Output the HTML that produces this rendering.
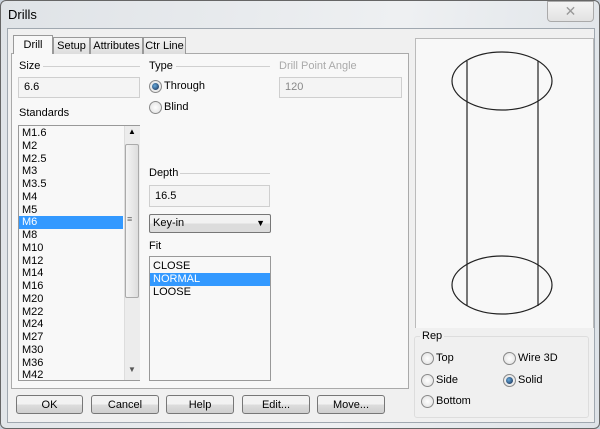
<!DOCTYPE html>
<html><head><style>
body{margin:0;width:600px;height:429px;background:#c9d2dc;font-family:"Liberation Sans",sans-serif;font-size:11px;color:#000;position:relative;overflow:hidden}
.a{position:absolute}
.frame{left:0;top:0;width:598px;height:427px;border:1px solid #666;border-radius:6px;background:linear-gradient(100deg,#dfe3e7,#eef0f2 60%,#dde2e7)}
.client{left:7px;top:28px;width:586px;height:393px;background:#f0f0f0;border:1px solid #a0a8b0}
.inp{background:#f4f4f4;border:1px solid #cfcfcf;padding-left:5px;box-sizing:border-box}
.lbl{font-size:11px}
.line{height:1px;background:#d0d0d0}
.radio{width:11px;height:11px;border-radius:50%;border:1px solid #8a8a8a;background:radial-gradient(circle,#fff,#ddd)}
.radio.on::after{content:"";position:absolute;left:2px;top:2px;width:7px;height:7px;border-radius:50%;background:radial-gradient(circle at 40% 40%,#6ad,#124)}
.btn{height:19px;border:1px solid #777;border-radius:3px;background:linear-gradient(#f2f2f2 50%,#ddd 50%,#cfcfcf);text-align:center;line-height:19px;box-sizing:border-box}
.tab{top:37px;height:17px;border:1px solid #999;border-bottom:none;background:linear-gradient(#f4f4f4,#ddd);text-align:center;line-height:16px;box-sizing:border-box}
.list div{height:12.75px;line-height:12.75px;padding-left:3px}
.sel{background:#3399ff;color:#fff}
</style></head><body>
<div class="a frame"></div>
<div class="a" style="left:8px;top:7px;font-size:13px">Drills</div>
<div class="a" style="left:547px;top:1px;width:45px;height:19px;border:1px solid #aaa;border-radius:0 0 4px 4px;background:linear-gradient(#f4f4f4,#e2e2e2);text-align:center;color:#999;font-size:14px;line-height:18px">✕</div>
<div class="a client"></div>
<div class="a" style="left:11px;top:53px;width:396px;height:334px;border:1px solid #aaa;background:#f8f8f8"></div>
<div class="a tab" style="left:13px;top:35px;width:40px;height:19px;background:#f8f8f8;line-height:18px">Drill</div>
<div class="a tab" style="left:53px;width:37px">Setup</div>
<div class="a tab" style="left:90px;width:53px">Attributes</div>
<div class="a tab" style="left:143px;width:43px">Ctr Line</div>

<div class="a lbl" style="left:19px;top:60px">Size</div><div class="a line" style="left:43px;top:66px;width:97px"></div>
<div class="a inp" style="left:18px;top:77px;width:122px;height:21px;line-height:19px">6.6</div>
<div class="a lbl" style="left:149px;top:60px">Type</div><div class="a line" style="left:176px;top:66px;width:94px"></div>
<div class="a radio on" style="left:149px;top:80px"></div><div class="a" style="left:164px;top:80px">Through</div>
<div class="a radio" style="left:149px;top:101px"></div><div class="a" style="left:164px;top:101px">Blind</div>
<div class="a lbl" style="left:279px;top:60px;color:#aaa">Drill Point Angle</div>
<div class="a inp" style="left:279px;top:77px;width:123px;height:21px;line-height:19px;color:#888">120</div>
<div class="a lbl" style="left:19px;top:107px">Standards</div>
<div class="a" style="left:18px;top:125px;width:122px;height:256px;border:1px solid #999;background:#f8f8f8;box-sizing:border-box"></div>
<div class="a list" style="left:19px;top:127px;width:104px">
<div>M1.6</div><div>M2</div><div>M2.5</div><div>M3</div><div>M3.5</div><div>M4</div><div>M5</div><div class="sel">M6</div><div>M8</div><div>M10</div><div>M12</div><div>M14</div><div>M16</div><div>M20</div><div>M22</div><div>M24</div><div>M27</div><div>M30</div><div>M36</div><div>M42</div></div>
<div class="a" style="left:124px;top:126px;width:15px;height:254px;background:#ececec;border-left:1px solid #ddd"></div>
<div class="a" style="left:128px;top:127px;font-size:8px">▲</div>
<div class="a" style="left:128px;top:365px;font-size:8px;color:#555">▼</div>
<div class="a" style="left:125px;top:144px;width:12px;height:152px;border:1px solid #aaa;border-radius:2px;background:linear-gradient(90deg,#f4f4f4,#ddd)"></div>
<div class="a" style="left:127px;top:214px;font-size:9px;color:#666">≡</div>

<div class="a lbl" style="left:149px;top:167px">Depth</div><div class="a line" style="left:180px;top:173px;width:90px"></div>
<div class="a inp" style="left:149px;top:185px;width:121px;height:22px;line-height:20px">16.5</div>
<div class="a" style="left:149px;top:214px;width:122px;height:19px;border:1px solid #777;border-radius:2px;background:linear-gradient(#f2f2f2 50%,#dcdcdc 50%);box-sizing:border-box;padding-left:3px;line-height:17px">Key-in<span style="position:absolute;right:5px;font-size:9px">▼</span></div>
<div class="a lbl" style="left:149px;top:240px">Fit</div>
<div class="a" style="left:149px;top:256px;width:122px;height:125px;border:1px solid #999;background:#f8f8f8;box-sizing:border-box"></div>
<div class="a list" style="left:150px;top:260px;width:120px"><div>CLOSE</div><div class="sel">NORMAL</div><div>LOOSE</div></div>

<div class="a" style="left:415px;top:38px;width:177px;height:289px;border:1px solid #bbb;border-bottom:none;background:#f8f8f8"></div>
<svg class="a" style="left:0;top:0" width="600" height="429">
<g fill="none" stroke="#222" stroke-width="1.2">
<ellipse cx="502" cy="81" rx="50" ry="29"/>
<ellipse cx="502" cy="285" rx="50" ry="29"/>
<line x1="467" y1="61" x2="467" y2="306"/>
<line x1="538" y1="61" x2="538" y2="306"/>
</g></svg>
<div class="a" style="left:414px;top:336px;width:173px;height:80px;border:1px solid #ddd;border-radius:3px"></div>
<div class="a" style="left:420px;top:330px;background:#f0f0f0;padding:0 2px">Rep</div>
<div class="a radio" style="left:421px;top:352px"></div><div class="a" style="left:436px;top:352px">Top</div>
<div class="a radio" style="left:503px;top:352px"></div><div class="a" style="left:518px;top:352px">Wire 3D</div>
<div class="a radio" style="left:421px;top:374px"></div><div class="a" style="left:436px;top:374px">Side</div>
<div class="a radio on" style="left:503px;top:374px"></div><div class="a" style="left:518px;top:374px">Solid</div>
<div class="a radio" style="left:421px;top:395px"></div><div class="a" style="left:436px;top:395px">Bottom</div>

<div class="a btn" style="left:16px;top:395px;width:67px">OK</div>
<div class="a btn" style="left:91px;top:395px;width:68px">Cancel</div>
<div class="a btn" style="left:166px;top:395px;width:68px">Help</div>
<div class="a btn" style="left:242px;top:395px;width:68px">Edit...</div>
<div class="a btn" style="left:317px;top:395px;width:68px">Move...</div>
</body></html>
